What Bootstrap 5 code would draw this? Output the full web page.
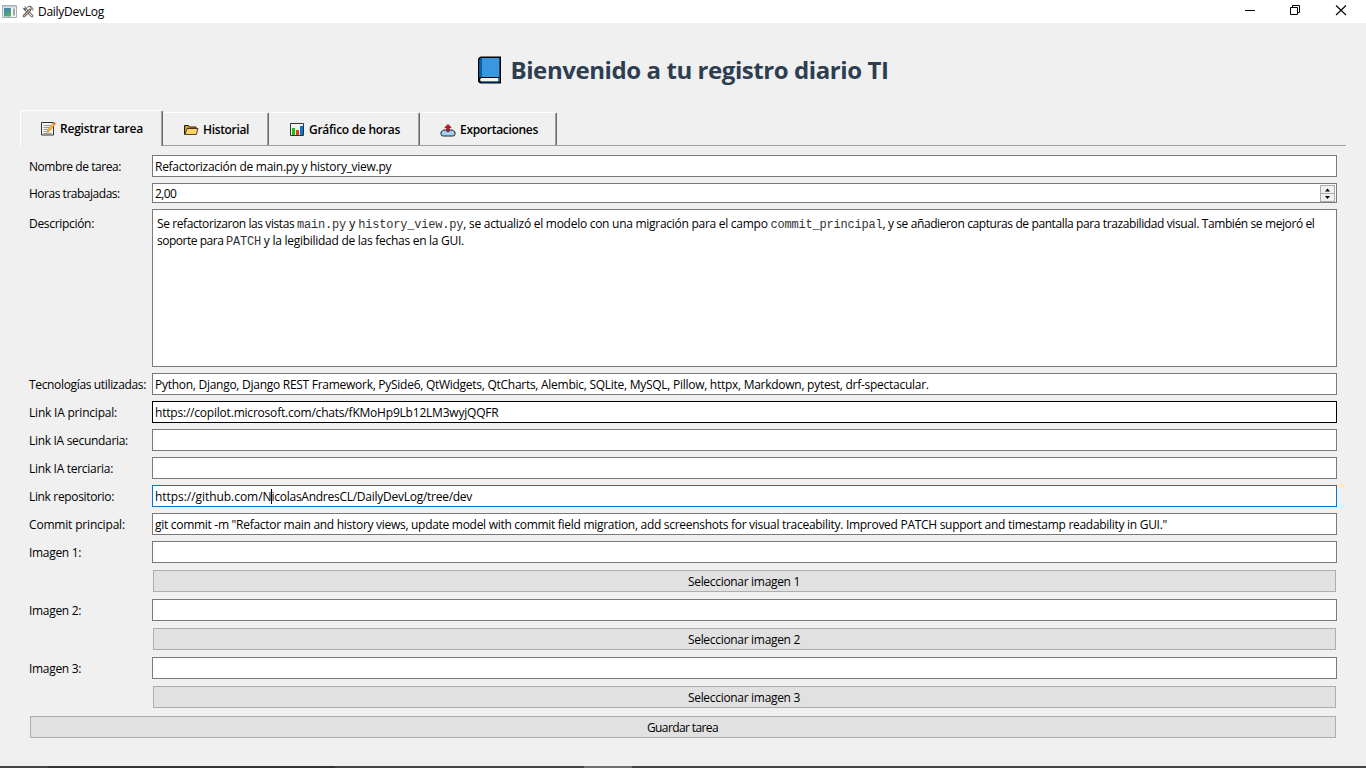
<!DOCTYPE html>
<html lang="es">
<head>
<meta charset="utf-8">
<title>DailyDevLog</title>
<meta name="viewport" content="width=device-width, initial-scale=1">
<link href="https://cdn.jsdelivr.net/npm/bootstrap@5.3.0/dist/css/bootstrap.min.css" rel="stylesheet">
<style>
body{background:#f0f0f0;color:#000;font:12px/16px "Open Sans","Noto Sans",sans-serif;height:100vh;overflow:hidden}
svg{display:block;flex:none}
.titlebar{height:23px;padding-left:2px}
.win-ctl{width:46px;height:23px}
.heading{height:87px;padding:7px 1px 1px 0;gap:9px}
.heading h1{font-size:24px;line-height:30px;font-weight:700;color:#2c3e50;letter-spacing:-.42px}
.tabs-bar{height:36px;margin:0 20px;border-bottom:1px solid #a0a0a0}
.tabs-bar .nav-link{height:33px;border:0;border-top:1px solid #fff;border-right:1px solid #696969;border-radius:3px 2px 0 0;box-shadow:inset -1px 0 #a0a0a0;color:#000;font-weight:600;padding:0 0 0 20px;display:flex;align-items:center;gap:4px;background:#f0f0f0;white-space:nowrap}
.tabs-bar .nav-link.active{height:36px;margin-bottom:-1px;border-left:1px solid #fff}
.tabs-bar .nav-link:not(.active){padding-top:1px}
.tb1{width:143px}.tb2{width:106px}.tb3{width:151px}.tb4{width:137px}
.tabs-bar .tb3{padding-left:21px}
.task-form{padding:9px 29px 0;gap:6px}
.line{display:grid;grid-template-columns:123px 1fr}
.lbl{line-height:24px;height:22px;white-space:nowrap}
.lbl-spin{height:20px;line-height:22px}
.lbl-memo{padding-top:3px}
.form-control{height:22px;padding:0 2px;border:1px solid #7a7a7a;border-radius:0;background:#fff;color:#000;font-size:12px;line-height:22px;white-space:nowrap}
.spin{height:20px;line-height:20px;padding-right:1px}
.spin>span{padding-top:2px}
.spin-box{width:15px;height:17px}
.spin-box span{height:9px;border:1px solid #acacac;background:#f0f0f0}
.spin-box span+span{margin-top:-1px}
.memo{height:158px;padding:5px 4px;line-height:17px;white-space:pre}
.memo code{font:12px/12px "Liberation Mono",monospace;color:#333;letter-spacing:-.2px}
.hot{border-color:#000}
.focused{border-color:#0078d7}
.caret{width:1px;height:15px;background:#000;left:118px;top:3px}
.btn{height:22px;margin:1px;border:1px solid #adadad;border-radius:0;background:#e1e1e1;color:#000;font-size:12px;line-height:21px;padding:0 1px 0 0}
.s5{letter-spacing:-.05px}.s18{letter-spacing:-.182px}.s21{letter-spacing:-.207px}.s23{letter-spacing:-.225px}.s26{letter-spacing:-.26px}.s27{letter-spacing:-.272px}.s29{letter-spacing:-.29px}.s31{letter-spacing:-.31px}.s34{letter-spacing:-.343px}.s39{letter-spacing:-.392px}.s41{letter-spacing:-.411px}.s45{letter-spacing:-.45px}.s48{letter-spacing:-.48px}.s61{letter-spacing:-.61px}
.taskbar{height:2px;background:linear-gradient(90deg,#444 48px,#353235 48px 335px,#444 335px 584px,#707070 584px 632px,#444 632px)}
</style>
</head>
<body class="d-flex flex-column">
<header class="titlebar bg-white d-flex align-items-center">
  <svg width="16" height="14" viewBox="0 0 16 14"><defs><linearGradient id="app" x2=".6" y2="1"><stop stop-color="#3d7bb0"/><stop offset="1" stop-color="#54b06c"/></linearGradient></defs><path fill="#f4f4f4" stroke="#a6adb3" d="M.5.5h14v12H.5z"/><path fill="#c5ccd3" d="M1 1h13v1.500H1z"/><path fill="url(#app)" d="M2 3h7v8.500H2z"/><path fill="#9aa5ad" d="M11 3.500h2v7h-2z"/></svg>
  <svg class="ms-1 me-1" width="12" height="13" viewBox="0 0 12 13"><g fill="none" stroke="#444" stroke-linecap="round"><path stroke-width="2.600" d="M3 4l7 7"/><path stroke="#eee" stroke-width="1.200" d="M3 4l7 7"/><path stroke-width="2.600" d="M8 5l-6 6"/><path stroke="#d9b48c" stroke-width="1.200" d="M8 5l-6 6"/><path stroke-width=".8" d="M1 3.500l2 1.500 1.500-2L3 1.500M5 2.500c1.500-1.500 3-1.500 4-1M8 2l3 3.500M9 1.500l2.300 2.500"/></g></svg>
  <span class="s27">DailyDevLog</span>
  <div class="ms-auto d-flex">
    <svg class="win-ctl" viewBox="0 0 46 23"><path d="M17 10.500h10" stroke="#000"/></svg>
    <svg class="win-ctl" viewBox="0 0 46 23"><path d="M16.500 7.500h7v7h-7zM18.500 7V5.500h7v7H24" fill="none" stroke="#000"/></svg>
    <svg class="win-ctl" viewBox="0 0 46 23"><path d="M16 5.500l10 9.500M26 5.500L16 15" stroke="#000" stroke-width="1.100"/></svg>
  </div>
</header>

<div class="heading d-flex align-items-center justify-content-center">
  <svg width="25" height="28" viewBox="0 0 25 28"><path d="M4 .5h20V27.500H4q-3-.5-3-3V4Q1 1 4 .5z" fill="#000"/><path d="M4.500 2H22.500v19H4.500q-1 0-2 .7V4q.3-1.700 2-2z" fill="#3a96dd"/><path d="M2.500 4q.3-1.700 2.500-2v19q-1.500 0-2.500.7z" fill="#0063b1"/><path d="M4.500 22H21.500v3.500H4.500q-1.500-.3-1.500-1.700T4.500 22z" fill="#f4f4f4"/><path d="M3 24.500q.5 1.500 2 1.500H22.500V21" fill="none" stroke="#0063b1" stroke-width=".8"/></svg>
  <h1 class="m-0">Bienvenido a tu registro diario TI</h1>
</div>

<nav class="tabs-bar nav flex-nowrap align-items-end">
  <a class="nav-link active tb1 s23"><svg width="15" height="15" viewBox="0 0 15 15"><path d="M.5 1.500h12v12.500H.5z" fill="#f2f2f2" stroke="#333"/><path d="M2.500 4.500h7M2.500 6.500h6M2.500 8.500h4M2.500 10.500h3M2.500 12.500h8" stroke="#999"/><path d="M6 11.500l.8-3L12.200 2l1.800 1.500-5.500 6.700z" fill="#fcb934" stroke="#7a5520" stroke-width=".4"/><path d="M12 2.300l1-1.300 1.900 1.500-1.100 1.400z" fill="#e9653b"/></svg>Registrar tarea</a>
  <a class="nav-link tb2 s34"><svg width="16" height="15" viewBox="0 0 16 15"><path d="M1.500 12.500V3.500h4l1 1.500h6.500v2" fill="#d99a24" stroke="#201a10"/><path d="M2 12.500L4 6.500H15l-1.700 6z" fill="#ffd267" stroke="#201a10" stroke-width=".8"/></svg>Historial</a>
  <a class="nav-link tb3 s27"><svg width="15" height="15" viewBox="0 0 15 15"><path d="M.5 1.500h13v12H.5z" fill="#f2f2f2" stroke="#333"/><path d="M2 6h3v7H2z" fill="#16c60c"/><path d="M6 8h3v5H6z" fill="#f03a17"/><path d="M10 4h3v9h-3z" fill="#0078d7"/></svg>Gráfico de horas</a>
  <a class="nav-link tb4 s31"><svg width="16" height="15" viewBox="0 0 16 15"><path d="M3.500 8h9l2.500 2v2q0 2-2 2H3q-2 0-2-2v-2z" fill="#9fd3f5" stroke="#222"/><path d="M8 2.500L4.800 5.500h2V9.500h2.400V5.500h2z" fill="#e81224" stroke="#4a1015" stroke-width=".7"/></svg>Exportaciones</a>
</nav>

<main class="task-form d-flex flex-column">
  <div class="line"><label class="lbl s45">Nombre de tarea:</label><div class="form-control s27">Refactorización de main.py y history_view.py</div></div>
  <div class="line"><label class="lbl lbl-spin s48">Horas trabajadas:</label>
    <div class="form-control spin d-flex justify-content-between align-items-center"><span class="s61">2,00</span>
      <div class="spin-box d-flex flex-column"><span><svg width="13" height="7" viewBox="0 0 13 7"><path d="M4 5.500h5L6.500 2.500z"/></svg></span><span><svg width="13" height="7" viewBox="0 0 13 7"><path d="M4 2h5L6.500 5z"/></svg></span></div>
    </div></div>
  <div class="line"><label class="lbl lbl-memo s31">Descripción:</label><div class="form-control memo"><span class="s41">Se refactorizaron las vistas </span><code>main.py</code> y <code>history_view.py</code><span class="s27">, se actualizó el modelo con una migración para el campo </span><code>commit_principal</code><span class="s39">, y se añadieron capturas de pantalla para trazabilidad visual. También se mejoró el</span>
<span class="s48">soporte para </span><code>PATCH</code><span class="s27"> y la legibilidad de las fechas en la GUI.</span></div></div>
  <div class="line"><label class="lbl s34">Tecnologías utilizadas:</label><div class="form-control s27">Python, Django, Django REST Framework, PySide6, QtWidgets, QtCharts, Alembic, SQLite, MySQL, Pillow, httpx, Markdown, pytest, drf-spectacular.</div></div>
  <div class="line"><label class="lbl s21">Link IA principal:</label><div class="form-control hot s21">https://copilot.microsoft.com/chats/fKMoHp9Lb12LM3wyjQQFR</div></div>
  <div class="line"><label class="lbl s31">Link IA secundaria:</label><div class="form-control"></div></div>
  <div class="line"><label class="lbl s29">Link IA terciaria:</label><div class="form-control"></div></div>
  <div class="line"><label class="lbl s34">Link repositorio:</label><div class="form-control focused position-relative"><span class="s5">https://github.com/N</span><span class="s26">icolasAndresCL/DailyDevLog/tree/dev</span><i class="caret position-absolute"></i></div></div>
  <div class="line"><label class="lbl s18">Commit principal:</label><div class="form-control s29">git commit -m "Refactor main and history views, update model with commit field migration, add screenshots for visual traceability. Improved PATCH support and timestamp readability in GUI."</div></div>
  <div class="line"><label class="lbl s31">Imagen 1:</label><div class="form-control"></div></div>
  <div class="line"><span></span><button class="btn s31">Seleccionar imagen 1</button></div>
  <div class="line"><label class="lbl s31">Imagen 2:</label><div class="form-control"></div></div>
  <div class="line"><span></span><button class="btn s31">Seleccionar imagen 2</button></div>
  <div class="line"><label class="lbl s31">Imagen 3:</label><div class="form-control"></div></div>
  <div class="line"><span></span><button class="btn s31">Seleccionar imagen 3</button></div>
  <button class="btn s61">Guardar tarea</button>
</main>
<footer class="taskbar mt-auto"></footer>
<script src="https://cdn.jsdelivr.net/npm/bootstrap@5.3.0/dist/js/bootstrap.bundle.min.js"></script>
</body>
</html>
